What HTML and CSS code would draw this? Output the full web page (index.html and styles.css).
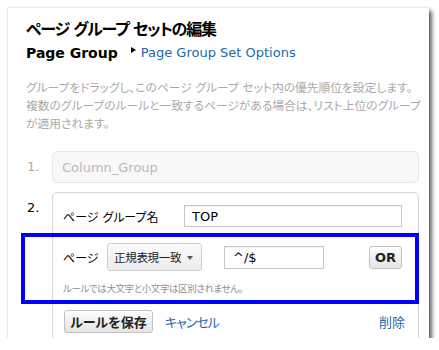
FILE: index.html
```html
<!DOCTYPE html>
<html lang="ja">
<head>
<meta charset="utf-8">
<link rel="stylesheet" href="styles.css">
</head>
<body>
<div class="dialog">
  <h1 class="title">ページ グループ セットの編集</h1>
  <div class="crumb">
    <span class="crumb-current">Page Group</span>
    <span class="crumb-arrow"></span>
    <a class="link crumb-link" href="#">Page Group Set Options</a>
  </div>
  <p class="desc">グループをドラッグし、このページ グループ セット内の優先順位を設定します。<br>複数のグループのルールと一致するページがある場合は、リスト上位のグループ<br>が適用されます。</p>
  <div class="item">
    <div class="num num-dim">1.</div>
    <div class="box box-dim">Column_Group</div>
  </div>
  <div class="item item-edit">
    <div class="num">2.</div>
    <div class="box box-edit">
      <div class="row">
        <span class="label label-name">ページ グループ名</span>
        <span class="input input-name">TOP</span>
      </div>
      <div class="row rule-row">
        <span class="label label-page">ページ</span>
        <span class="select">正規表現一致<span class="caret"></span></span>
        <span class="input input-rule">^/$</span>
        <span class="btn btn-or">OR</span>
      </div>
      <div class="note">ルールでは大文字と小文字は区別されません。</div>
      <div class="actions">
        <span class="btn btn-save">ルールを保存</span>
        <a class="link cancel" href="#">キャンセル</a>
        <a class="link delete" href="#">削除</a>
      </div>
    </div>
  </div>
  <div class="highlight"></div>
</div>
</body>
</html>
```
FILE: styles.css
```css
* { box-sizing: border-box; }
html, body { margin: 0; background: #fff; }
body {
  font-family: "DejaVu Sans", "Noto Sans CJK JP", sans-serif;
  font-feature-settings: "palt";
  color: #000;
}
.dialog {
  position: relative;
  margin: 8px 0 0 8px;
  width: 421px;
  height: 330px;
  overflow: hidden;
  background: #fff;
  padding: 12px 10px 0 18px;
  box-shadow: 0 0 2px rgba(0,0,0,0.18), 3px 3px 4px rgba(0,0,0,0.6);
}
.title {
  margin: 0;
  font-size: 16px;
  line-height: 20px;
  font-weight: 700;
  letter-spacing: -1.2px;
  white-space: nowrap;
}
.crumb {
  display: flex;
  align-items: center;
  height: 18px;
  margin-top: 4px;
}
.crumb-current {
  font-size: 14px;
  font-weight: 700;
  line-height: 18px;
}
.crumb-arrow {
  align-self: flex-start;
  margin: 3px 0 0 13px;
  width: 0;
  height: 0;
  border-left: 5px solid #000;
  border-top: 3.5px solid transparent;
  border-bottom: 3.5px solid transparent;
}
.link {
  color: #1d68b0;
  text-decoration: none;
  font-size: 13px;
}
.crumb-link { margin-left: 5px; line-height: 18px; }
.desc {
  margin: 17px 0 0;
  font-size: 11.75px;
  line-height: 18px;
  color: #a9a9a9;
  white-space: nowrap;
}
.item {
  display: flex;
  margin-top: 18px;
}
.item-edit { margin-top: 9px; }
.num {
  flex: none;
  width: 26px;
  padding: 7px 0 0 1px;
  font-size: 13px;
  line-height: 18px;
}
.num-dim { color: #ababab; }
.box {
  flex: 1;
  border-radius: 5px;
}
.box-dim {
  height: 32px;
  display: flex;
  align-items: center;
  padding-left: 9px;
  background: #f8f8f8;
  border: 1px solid #e6e6e6;
  color: #b9b9b9;
  font-size: 13px;
}
.box-edit {
  border: 1px solid #d6d6d6;
  padding: 12px 16px 20px 10px;
  font-size: 12px;
}
.row {
  display: flex;
  align-items: center;
}
.label { flex: none; font-size: 12px; white-space: nowrap; }
.label-name { width: 121px; }
.label-page { width: 44px; }
.input {
  display: flex;
  align-items: center;
  height: 22px;
  border: 1px solid #c6c6c6;
  box-shadow: inset 0 1px 1px rgba(0,0,0,0.06);
  font-size: 13px;
  padding-left: 7px;
  background: #fff;
}
.input-name { flex: 1; }
.rule-row { margin-top: 16px; height: 28px; }
.select {
  position: relative;
  display: flex;
  align-items: center;
  width: 95px;
  height: 28px;
  padding-left: 6px;
  border: 1px solid #cfcfcf;
  border-radius: 3px;
  background: linear-gradient(#fbfbfb, #ececec);
  font-size: 11.5px;
  letter-spacing: -0.3px;
  color: #222;
}
.caret {
  position: absolute;
  right: 8px;
  top: 12px;
  width: 0;
  height: 0;
  border-top: 4px solid #555;
  border-left: 3.5px solid transparent;
  border-right: 3.5px solid transparent;
}
.input-rule {
  width: 100px;
  height: 23px;
  margin-left: 22px;
  padding-left: 8px;
}
.btn {
  display: flex;
  align-items: center;
  justify-content: center;
  border: 1px solid #c2c2c2;
  border-radius: 3px;
  background: linear-gradient(#fdfdfd, #e4e4e4);
  font-weight: 700;
  font-size: 13px;
  color: #222;
}
.btn-or {
  margin-left: auto;
  width: 33px;
  height: 23px;
}
.note {
  margin-top: 11px;
  font-size: 9.5px;
  letter-spacing: -0.4px;
  line-height: 14px;
  color: #8e8e8e;
  white-space: nowrap;
}
.actions {
  display: flex;
  align-items: center;
  margin-top: 14px;
}
.btn-save {
  margin-left: 1px;
  width: 89px;
  height: 23px;
}
.cancel { margin-left: 12px; letter-spacing: -1px; }
.delete { margin-left: auto; margin-right: -3px; }
.highlight {
  position: absolute;
  left: 13px;
  top: 225px;
  width: 398px;
  height: 71px;
  border: 4px solid #0000ff;
}
```
